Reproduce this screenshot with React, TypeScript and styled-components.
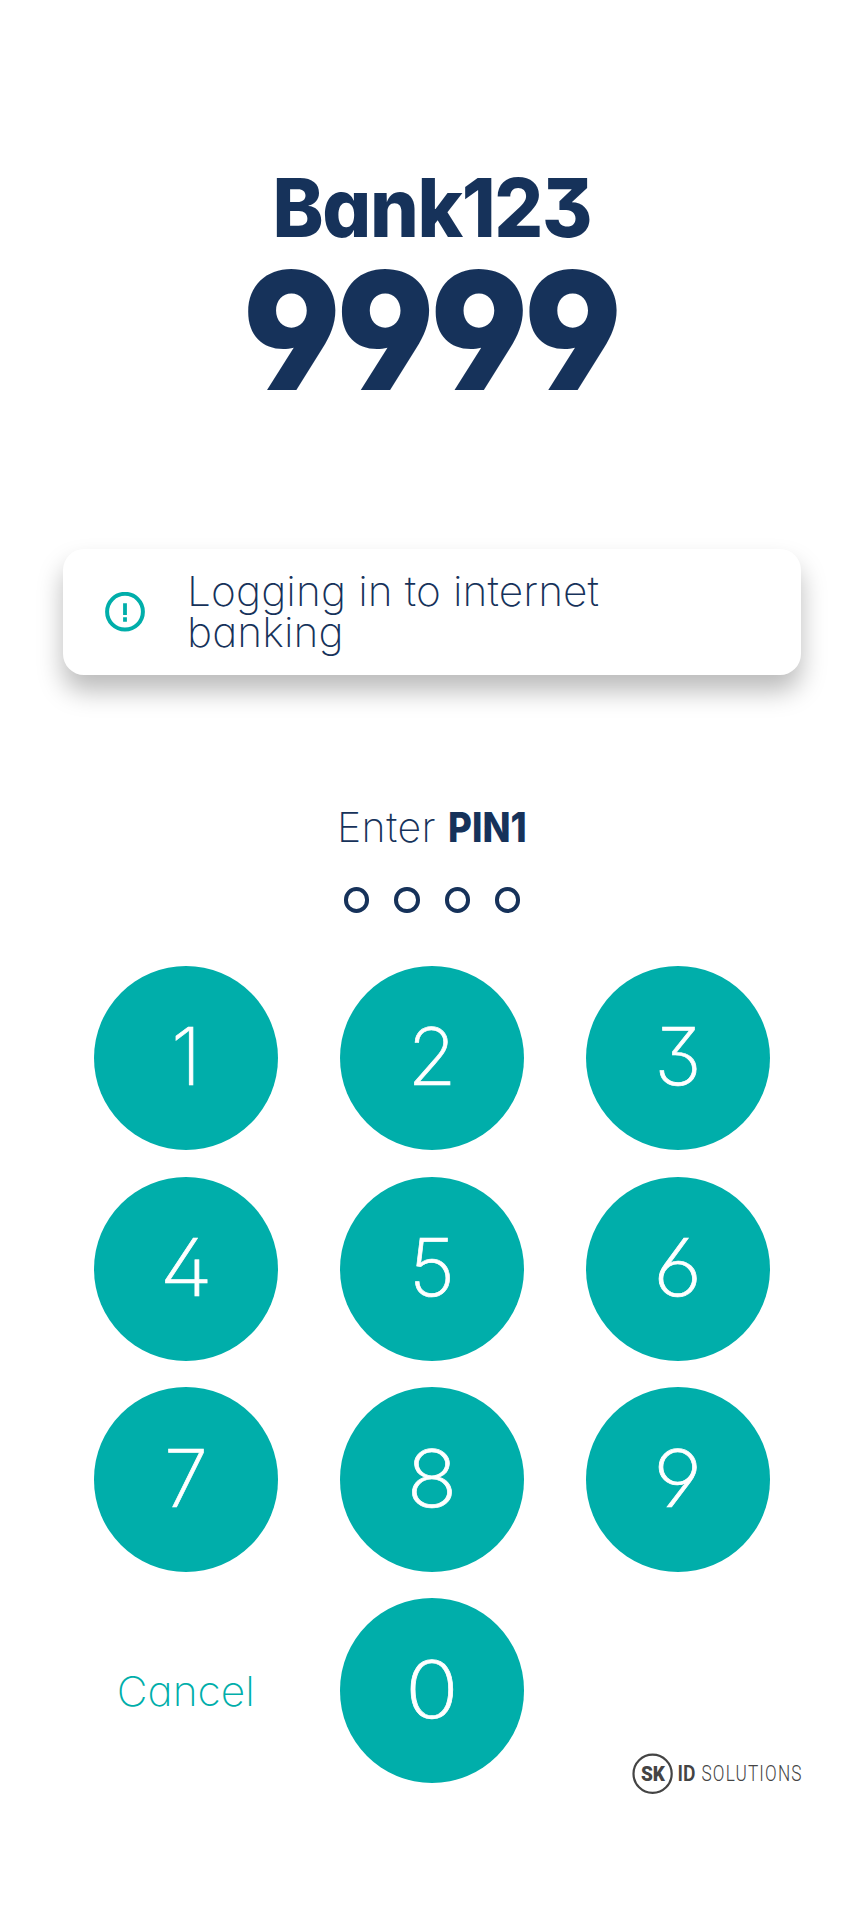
import React from 'react';
import styled, { createGlobalStyle } from 'styled-components';

const NAVY = '#16325a';
const TEAL = '#00aeaa';

const GlobalStyle = createGlobalStyle`
  body {
    margin: 0;
    background: #ffffff;
  }
`;

const Screen = styled.main`
  box-sizing: border-box;
  display: flex;
  flex-direction: column;
  align-items: center;
  width: 864px;
  height: 1920px;
  padding-top: 168px;
  overflow: hidden;
  background: #ffffff;
  color: ${NAVY};
  font-family: Inter, 'Open Sans', sans-serif;
  font-weight: 200;
  font-feature-settings: 'cv11', 'cv09', 'cv02', 'cv03', 'cv04';
`;

const Title = styled.h1`
  margin: 0;
  font-size: 81px;
  line-height: 80px;
  font-weight: 800;
  letter-spacing: -1.4px;
  transform: scaleX(0.949);
`;

const ControlCode = styled.div`
  margin-top: 18px;
  padding-right: 4px;
  font-size: 164px;
  line-height: 130px;
  font-weight: 900;
  letter-spacing: -4.2px;
  transform: scaleX(0.926);
`;

const Card = styled.section`
  box-sizing: border-box;
  display: flex;
  align-items: center;
  gap: 42px;
  width: 738px;
  height: 125.5px;
  margin-top: 153px;
  padding: 0 60px 0 42px;
  border-radius: 21px;
  background: #ffffff;
  box-shadow: 0 16px 26px rgba(0, 0, 0, 0.27);
`;

const CardText = styled.p`
  margin: 0;
  padding-top: 1px;
  width: 430px;
  font-size: 41px;
  line-height: 41.5px;
  letter-spacing: 0.1px;
  transform: scaleX(1.034);
  transform-origin: left;
`;

const Prompt = styled.p`
  margin: 132.5px 0 0;
  font-size: 41px;
  line-height: 40px;
  letter-spacing: 0.5px;
  white-space: pre;
`;

const PinName = styled.strong`
  display: inline-block;
  margin: 0 -9px 0 0;
  font-weight: 800;
  letter-spacing: 0;
  transform: scaleX(0.895);
  transform-origin: left;
`;

const Dots = styled.div`
  display: flex;
  gap: 25px;
  margin-top: 40.3px;
`;

const Dot = styled.span`
  box-sizing: border-box;
  width: 25.4px;
  height: 25.4px;
  border: 4px solid ${NAVY};
  border-radius: 50%;
`;

const Keypad = styled.div`
  display: grid;
  grid-template-columns: repeat(3, 184.5px);
  grid-auto-rows: 184.5px;
  gap: 26.4px 61.5px;
  margin-top: 53px;
`;

const Key = styled.button`
  padding: 0 0 4px;
  border: 0;
  border-radius: 50%;
  background: ${TEAL};
  color: #ffffff;
  font: inherit;
  font-size: 79.5px;
  font-feature-settings: inherit;
  -webkit-text-stroke: 0.7px #ffffff;
`;

const Digit = styled.span<{ $stretch: number }>`
  display: inline-block;
  transform: scaleX(${({ $stretch }) => $stretch});
`;

const CancelButton = styled.button`
  padding: 0 1px 0 0;
  border: 0;
  background: none;
  color: ${TEAL};
  font: inherit;
  font-size: 41px;
  font-feature-settings: inherit;
  transform: scaleX(1.035);
`;

const Footer = styled.footer`
  display: flex;
  justify-content: flex-end;
  width: 748px;
  margin-top: -29.5px;
`;

const AlertIcon = () => (
  <svg width="40" height="40" viewBox="0 0 40 40" fill="none">
    <circle cx="20" cy="19.7" r="17.9" stroke={TEAL} strokeWidth="4" />
    <path d="M20 11.3V23.1M20 25.3V29.7" stroke={TEAL} strokeWidth="3.8" />
  </svg>
);

const SkLogo = () => (
  <svg width="176" height="42" viewBox="0 0 176 42" fontFamily="Roboto, sans-serif" fill="#444444">
    <circle cx="22.6" cy="20.8" r="19.1" fill="none" stroke="#444444" strokeWidth="2.2" />
    <text x="11" y="27.8" fontSize="19.5" fontWeight="900" textLength="24" lengthAdjust="spacingAndGlyphs">SK</text>
    <text x="47.6" y="28.2" fontSize="21.5" fontWeight="600" textLength="18" lengthAdjust="spacingAndGlyphs">ID</text>
    <g transform="translate(71.5 28.2) scale(0.8 1)">
      <text fontSize="21.5" fontWeight="300" textLength="125" lengthAdjust="spacing">SOLUTIONS</text>
    </g>
  </svg>
);

const DIGITS = ['1', '2', '3', '4', '5', '6', '7', '8', '9'];

const STRETCH: Record<string, number> = { '0': 1.12, '4': 1.1, '6': 1.08, '8': 1.05, '9': 1.08 };

const DigitKey = ({ value }: { value: string }) => (
  <Key>
    <Digit $stretch={STRETCH[value] ?? 1}>{value}</Digit>
  </Key>
);

export default function App() {
  return (
    <Screen>
      <GlobalStyle />
      <Title>Bank123</Title>
      <ControlCode>9999</ControlCode>
      <Card>
        <AlertIcon />
        <CardText>Logging in to internet banking</CardText>
      </Card>
      <Prompt>
        Enter <PinName>PIN1</PinName>
      </Prompt>
      <Dots>
        {[0, 1, 2, 3].map((slot) => (
          <Dot key={slot} />
        ))}
      </Dots>
      <Keypad>
        {DIGITS.map((digit) => (
          <DigitKey key={digit} value={digit} />
        ))}
        <CancelButton>Cancel</CancelButton>
        <DigitKey value="0" />
      </Keypad>
      <Footer>
        <SkLogo />
      </Footer>
    </Screen>
  );
}
